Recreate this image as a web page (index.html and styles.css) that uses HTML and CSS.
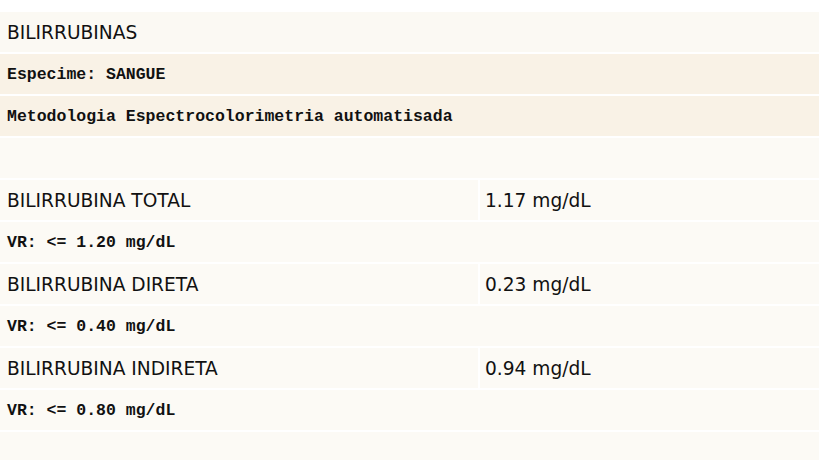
FILE: index.html
```html
<!DOCTYPE html>
<html lang="pt">
<head>
    <meta charset="UTF-8">
    <title>Bilirrubinas</title>
    <link rel="stylesheet" href="styles.css">
</head>
<body>
    <table class="laudo">
        <colgroup>
            <col class="col-nome">
            <col class="col-valor">
        </colgroup>
        <tr class="titulo">
            <td colspan="2">BILIRRUBINAS</td>
        </tr>
        <tr class="info">
            <td colspan="2" class="mono">Especime: SANGUE</td>
        </tr>
        <tr class="info">
            <td colspan="2" class="mono">Metodologia Espectrocolorimetria automatisada</td>
        </tr>
        <tr>
            <td colspan="2"></td>
        </tr>
        <tr>
            <td>BILIRRUBINA TOTAL</td>
            <td class="valor">1.17 mg/dL</td>
        </tr>
        <tr>
            <td colspan="2" class="mono">VR: &lt;= 1.20 mg/dL</td>
        </tr>
        <tr>
            <td>BILIRRUBINA DIRETA</td>
            <td class="valor">0.23 mg/dL</td>
        </tr>
        <tr>
            <td colspan="2" class="mono">VR: &lt;= 0.40 mg/dL</td>
        </tr>
        <tr>
            <td>BILIRRUBINA INDIRETA</td>
            <td class="valor">0.94 mg/dL</td>
        </tr>
        <tr>
            <td colspan="2" class="mono">VR: &lt;= 0.80 mg/dL</td>
        </tr>
        <tr>
            <td colspan="2"></td>
        </tr>
    </table>
</body>
</html>
```

FILE: styles.css
```css
body {
    margin: 0;
    background-color: #ffffff;
    font-family: "DejaVu Sans", Verdana, sans-serif;
    color: #111111;
    overflow: hidden;
}
.laudo {
    width: calc(100% + 4px);
    margin: 10px -2px 0 -2px;
    border-spacing: 2px;
    table-layout: fixed;
}
.col-nome {
    width: 478px;
}
.laudo td {
    height: 40px;
    padding: 0 7px;
    background-color: #fcfaf5;
    font-size: 18.6px;
    vertical-align: middle;
    white-space: nowrap;
}
.titulo td {
    background-color: #fbf9f3;
}
.info td {
    background-color: #f9f2e6;
}
.laudo td.valor {
    padding-left: 5px;
}
.laudo td.mono {
    font-family: "Liberation Mono", "Courier New", monospace;
    font-size: 16.5px;
    font-weight: bold;
}
```
